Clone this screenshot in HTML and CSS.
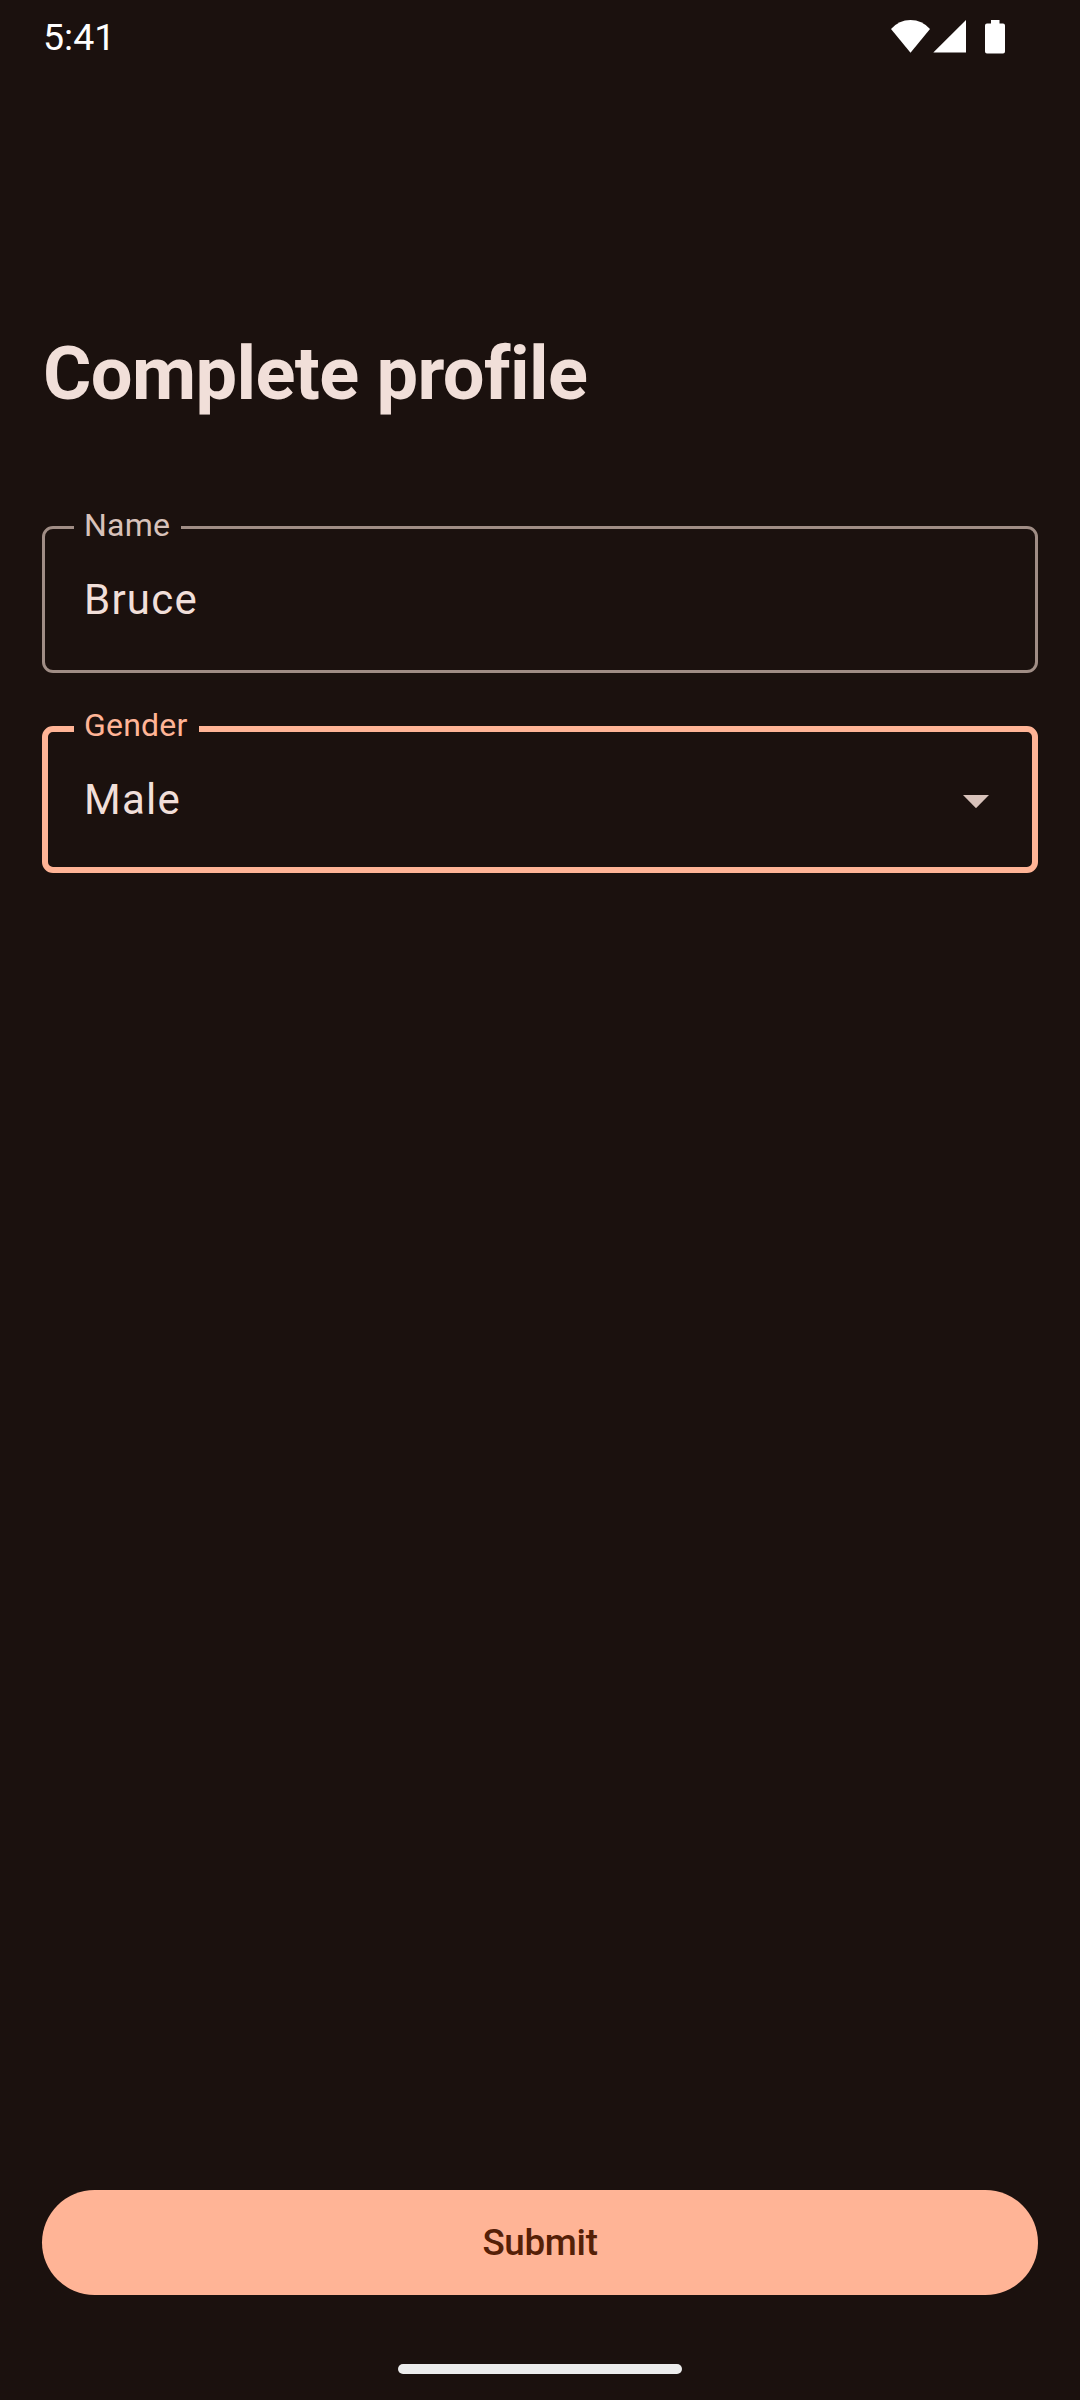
FILE: index.html
```html
<!DOCTYPE html>
<html lang="en">
<head>
<meta charset="utf-8">
<title>Complete profile</title>
<link rel="stylesheet" href="styles.css">
</head>
<body>
<div class="screen">
  <header class="status-bar">
    <span class="clock">5:41</span>
    <svg class="status-icons" width="116" height="36" viewBox="890 19 116 36" aria-hidden="true">
      <path d="M891 29 Q899 20 910.500 20 Q922 20 930 29 L910.500 52.700 Z"/>
      <path d="M933.300 52.500 L966 20 V52.500 Z"/>
      <path d="M991 20 H999.500 V23.500 H1003 Q1005 23.500 1005 25.500 V51.500 Q1005 53.500 1003 53.500 H987 Q985 53.500 985 51.500 V25.500 Q985 23.500 987 23.500 H991 Z"/>
    </svg>
  </header>
  <main class="content">
    <h1 class="title">Complete profile</h1>
    <form class="form">
      <div class="field">
        <span class="field-label">Name</span>
        <span class="field-value">Bruce</span>
      </div>
      <div class="field field-focused">
        <span class="field-label">Gender</span>
        <span class="field-value">Male</span>
        <svg class="arrow" width="26" height="13" viewBox="0 0 26 13" aria-hidden="true"><path d="M0 0H26L13 13.200Z"/></svg>
      </div>
      <button class="submit" type="button">Submit</button>
    </form>
  </main>
  <footer class="nav-bar"><div class="nav-handle"></div></footer>
</div>
</body>
</html>
```
FILE: styles.css
```css
* {
  box-sizing: border-box;
}

body {
  margin: 0;
  background: #1b110e;
  font-family: Roboto, sans-serif;
}

.screen {
  display: flex;
  flex-direction: column;
  height: 2400px;
  color: #f1dfd9;
}

.status-bar {
  display: flex;
  justify-content: space-between;
  align-items: center;
  height: 74px;
  padding: 0 74px 0 43px;
  color: #fff;
}

.clock {
  padding-top: 1px;
  font-size: 37.500px;
  line-height: 73px;
}

.status-icons {
  fill: #fff;
}

.content {
  flex: 1;
  display: flex;
  flex-direction: column;
  padding: 252px 42px 0;
}

.title {
  margin: 0 0 105px;
  padding-left: 1px;
  font-size: 74px;
  font-weight: 700;
  line-height: 95px;
  letter-spacing: -0.600px;
  white-space: nowrap;
}

.form {
  flex: 1;
  display: flex;
  flex-direction: column;
  gap: 53px;
}

.field {
  position: relative;
  display: flex;
  align-items: center;
  justify-content: space-between;
  height: 147px;
  padding: 0 46px 0 39px;
  border: 3px solid #a08d85;
  border-radius: 11px;
}

.field-label {
  position: absolute;
  left: 29px;
  top: -25px;
  padding: 0 11px 0 10px;
  background: #1b110e;
  color: #d8c2ba;
  font-size: 32px;
  line-height: 42px;
  letter-spacing: 0.200px;
}

.field-value {
  font-size: 42px;
  line-height: 63px;
  letter-spacing: 1.220px;
}

.field-focused {
  padding: 0 43.500px 0 36px;
  border: 6px solid #ffb496;
}

.field-focused .field-label {
  left: 26px;
  top: -28px;
  color: #ffb496;
}

.arrow {
  margin-top: 4px;
  fill: #d8c2ba;
}

.submit {
  height: 105px;
  margin-top: auto;
  border: 0;
  border-radius: 53px;
  background: #ffb496;
  color: #552007;
  font-family: inherit;
  font-size: 36.750px;
  font-weight: 500;
  letter-spacing: -0.300px;
}

.nav-bar {
  display: flex;
  justify-content: center;
  height: 105px;
  padding-top: 69px;
}

.nav-handle {
  width: 284px;
  height: 10px;
  border-radius: 5px;
  background: #ececec;
}
```
